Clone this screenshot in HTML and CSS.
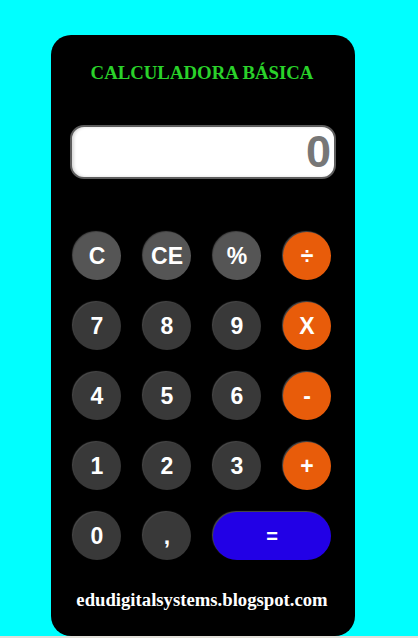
FILE: index.html
```html
<!DOCTYPE html>
<html lang="es">
<head>
<meta charset="utf-8">
<title>Calculadora Básica</title>
<link rel="stylesheet" href="styles.css">
</head>
<body>
<div class="card">
  <h1 class="title">CALCULADORA BÁSICA</h1>
  <div class="display">0</div>
  <div class="keys">
    <button class="key fn">C</button>
    <button class="key fn">CE</button>
    <button class="key fn">%</button>
    <button class="key op">÷</button>
    <button class="key num">7</button>
    <button class="key num">8</button>
    <button class="key num">9</button>
    <button class="key op">X</button>
    <button class="key num">4</button>
    <button class="key num">5</button>
    <button class="key num">6</button>
    <button class="key op">-</button>
    <button class="key num">1</button>
    <button class="key num">2</button>
    <button class="key num">3</button>
    <button class="key op">+</button>
    <button class="key num">0</button>
    <button class="key num">,</button>
    <button class="key eq">=</button>
  </div>
  <div class="footer">edudigitalsystems.blogspot.com</div>
</div>
<div class="strip"></div>
</body>
</html>
```
FILE: styles.css
```css
html, body {
  margin: 0;
  padding: 0;
}
body {
  background: #00ffff;
  height: 638px;
  overflow: hidden;
  padding-top: 35px;
  box-sizing: border-box;
}
.card {
  margin-left: 51px;
  width: 304px;
  height: 601px;
  background: #000;
  border-radius: 20px;
  box-sizing: border-box;
  padding: 0 24px 0 22px;
  display: flex;
  flex-direction: column;
}
.title {
  margin: 27px 0 0 0;
  height: 22px;
  line-height: 22px;
  text-align: center;
  font-family: "Liberation Serif", serif;
  font-weight: bold;
  font-size: 18.8px;
  color: #2ad22a;
  white-space: nowrap;
}
.display {
  margin: 41px -5px 0 -3px;
  height: 54px;
  box-sizing: border-box;
  background: #fff;
  border: 2px solid #5e5e5e;
  border-radius: 14px;
  box-shadow: inset 2px 0 3px rgba(0,0,0,0.15);
  text-align: right;
  padding-right: 3px;
  font-family: "Liberation Sans", Arial, sans-serif;
  font-weight: bold;
  font-size: 45px;
  line-height: 50px;
  color: #777;
}
.keys {
  margin-top: 53px;
  display: grid;
  grid-template-columns: repeat(4, 48px);
  grid-auto-rows: 48px;
  gap: 22px;
}
.key {
  border: none;
  margin: 0;
  padding: 0;
  border-radius: 24px;
  color: #fff;
  font-family: "Liberation Sans", Arial, sans-serif;
  font-weight: bold;
  font-size: 23px;
  box-shadow: -1px -1px 1px rgba(140,140,140,0.55);
}
.fn {
  background: #555555;
}
.num {
  background: #393939;
}
.op {
  background: #e85c0a;
}
.eq {
  grid-column: span 2;
  background: #2200e6;
  font-size: 20px;
}
.footer {
  margin-top: 30px;
  height: 20px;
  line-height: 20px;
  text-align: center;
  font-family: "Liberation Serif", serif;
  font-weight: bold;
  font-size: 18.7px;
  color: #fff;
  white-space: nowrap;
}
.strip {
  height: 10px;
  background: #e2e0da;
}
```
